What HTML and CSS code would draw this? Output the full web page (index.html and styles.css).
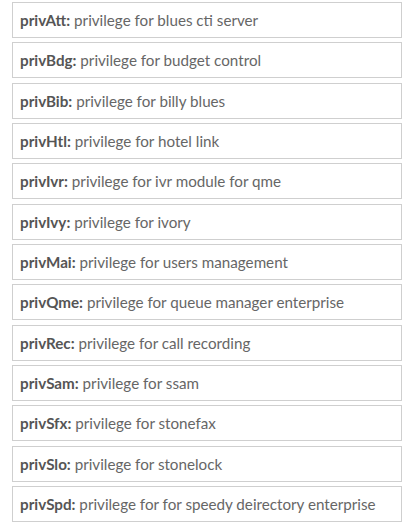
FILE: index.html
```html
<!DOCTYPE html>
<html>
<head>
<meta charset="utf-8">
<link rel="stylesheet" href="styles.css">
</head>
<body>
<ul class="privs">
<li class="priv"><b class="code">privAtt:</b> privilege for blues cti server</li>
<li class="priv"><b class="code">privBdg:</b> privilege for budget control</li>
<li class="priv"><b class="code">privBib:</b> privilege for billy blues</li>
<li class="priv"><b class="code">privHtl:</b> privilege for hotel link</li>
<li class="priv"><b class="code">privIvr:</b> privilege for ivr module for qme</li>
<li class="priv"><b class="code">privIvy:</b> privilege for ivory</li>
<li class="priv"><b class="code">privMai:</b> privilege for users management</li>
<li class="priv"><b class="code">privQme:</b> privilege for queue manager enterprise</li>
<li class="priv"><b class="code">privRec:</b> privilege for call recording</li>
<li class="priv"><b class="code">privSam:</b> privilege for ssam</li>
<li class="priv"><b class="code">privSfx:</b> privilege for stonefax</li>
<li class="priv"><b class="code">privSlo:</b> privilege for stonelock</li>
<li class="priv"><b class="code">privSpd:</b> privilege for for speedy deirectory enterprise</li>
</ul>
</body>
</html>
```
FILE: styles.css
```css
html, body {
  margin: 0;
  padding: 0;
  background: #fff;
}
.privs {
  list-style: none;
  margin: 0;
  padding: 2px 10px 0 12px;
  display: flex;
  flex-direction: column;
  gap: 4.33px;
}
.priv {
  box-sizing: border-box;
  height: 36px;
  border: 1px solid #cfcfcf;
  padding: 0 7px;
  display: flex;
  align-items: center;
  font-family: "Lato", sans-serif;
  font-size: 15.2px;
  color: #666;
  white-space: pre;
}
.code {
  font-weight: 700;
  color: #555;
}
```
